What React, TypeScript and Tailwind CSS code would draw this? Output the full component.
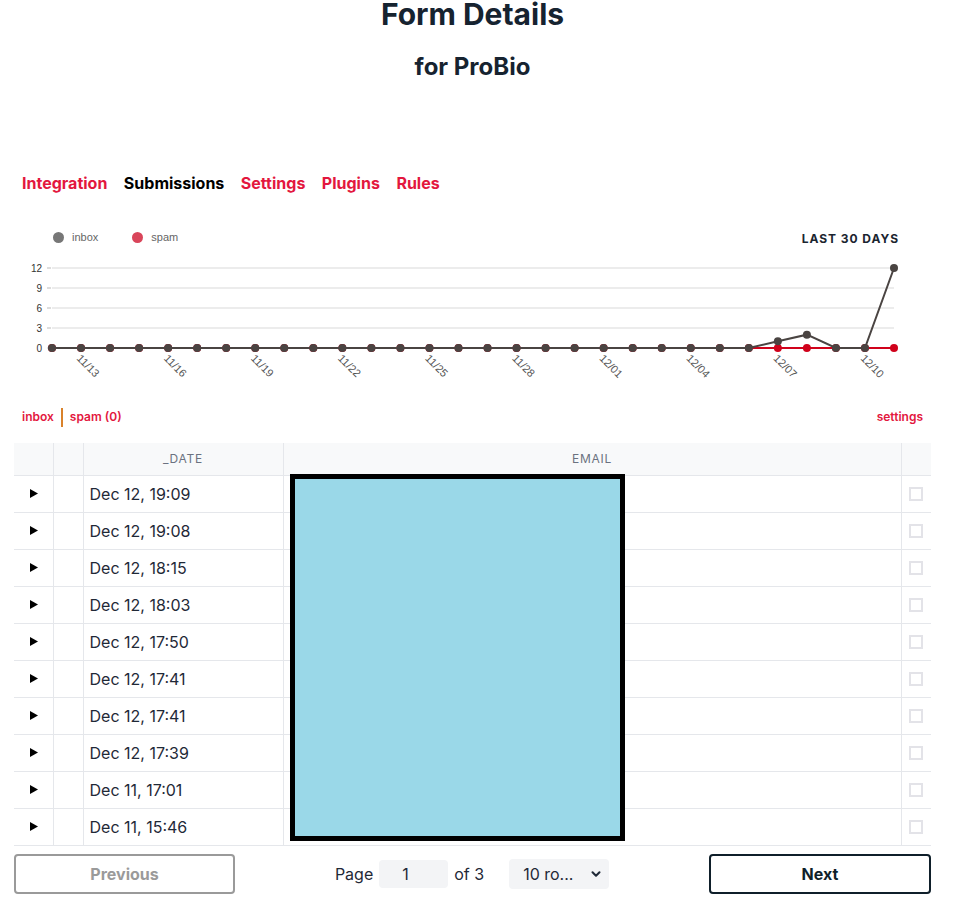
import { ChevronDown } from "lucide-react";

const RED = "#e3173e";

const inbox = [0, 0, 0, 0, 0, 0, 0, 0, 0, 0, 0, 0, 0, 0, 0, 0, 0, 0, 0, 0, 0, 0, 0, 0, 0, 1, 2, 0, 0, 12];
const spam = inbox.map(() => 0);

const labelFor = (i: number) => {
  // day 0 is 11/12
  const d = new Date(2023, 10, 12 + i);
  const mm = String(d.getMonth() + 1).padStart(2, "0");
  const dd = String(d.getDate()).padStart(2, "0");
  return `${mm}/${dd}`;
};

const rows = [
  "Dec 12, 19:09",
  "Dec 12, 19:08",
  "Dec 12, 18:15",
  "Dec 12, 18:03",
  "Dec 12, 17:50",
  "Dec 12, 17:41",
  "Dec 12, 17:41",
  "Dec 12, 17:39",
  "Dec 11, 17:01",
  "Dec 11, 15:46",
];

const Chart = () => {
  const x0 = 38;
  const step = (880 - 38) / 29;
  const yFor = (v: number) => 92 - (v * 80) / 12;
  const px = (i: number) => x0 + i * step;
  const line = (data: number[]) => data.map((v, i) => `${i === 0 ? "M" : "L"}${px(i)},${yFor(v)}`).join(" ");

  return (
    <svg width="917" height="135" className="block" style={{ fontFamily: "'Liberation Sans', Arial, sans-serif" }}>
      {[0, 3, 6, 9, 12].map((v) => (
        <g key={v}>
          {v > 0 && <line x1={x0} x2={880} y1={yFor(v)} y2={yFor(v)} stroke="#ececec" strokeWidth="2" />}
          <line x1={33} x2={37} y1={yFor(v)} y2={yFor(v)} stroke="#bbb" strokeWidth="1" />
          <text x={28} y={yFor(v) + 3.5} fontSize="10" fill="#333" textAnchor="end">
            {v}
          </text>
        </g>
      ))}
      {inbox.map((_, i) =>
        i % 3 === 1 ? (
          <text key={i} fontSize="11" fill="#555" transform={`translate(${px(i) - 5},${103}) rotate(45)`}>
            {labelFor(i)}
          </text>
        ) : null
      )}
      <path d={line(spam)} fill="none" stroke="#d0021b" strokeWidth="2" />
      {spam.map((v, i) => (
        <circle key={i} cx={px(i)} cy={yFor(v)} r="4" fill="#d0021b" />
      ))}
      <path d={line(inbox)} fill="none" stroke="#4a4442" strokeWidth="2" />
      {inbox.map((v, i) => (
        <circle key={i} cx={px(i)} cy={yFor(v)} r="4" fill="#4a4442" />
      ))}
    </svg>
  );
};

const Triangle = () => (
  <svg width="8" height="9" viewBox="0 0 8 9">
    <polygon points="0,0 8,4.5 0,9" fill="#000" />
  </svg>
);

export default function App() {
  return (
    <div className="w-[967px] bg-white text-[#1f2937]" style={{ fontFamily: "Inter, 'Liberation Sans', sans-serif" }}>
      <div className="ml-[14px] w-[917px]">
        <h1 className="text-center text-[30px] font-bold leading-[28px] text-[#162330]">Form Details</h1>
        <h2 className="mt-[26px] text-center text-[24px] font-bold leading-[26px] text-[#162330]">for ProBio</h2>

        <nav className="mt-[91px] flex gap-[16.5px] pl-2 text-[16px] font-bold leading-[24px]">
          <span style={{ color: RED }}>Integration</span>
          <span className="text-black">Submissions</span>
          <span style={{ color: RED }}>Settings</span>
          <span style={{ color: RED }}>Plugins</span>
          <span style={{ color: RED }}>Rules</span>
        </nav>

        <div className="mt-[31px] flex h-[22px] items-center justify-between pr-[32px]">
          <div className="flex items-center pl-[39px] text-[11px] text-[#666]" style={{ fontFamily: "'Liberation Sans', Arial, sans-serif" }}>
            <span className="h-[11px] w-[11px] rounded-full bg-[#777]" />
            <span className="ml-[8px]">inbox</span>
            <span className="ml-[34px] h-[11px] w-[11px] rounded-full bg-[#d9455a]" />
            <span className="ml-[8px]">spam</span>
          </div>
          <div className="mt-[4px] text-[12px] font-bold tracking-[0.08em] text-[#1b2530]">LAST 30 DAYS</div>
        </div>

        <div className="mt-[8px]">
          <Chart />
        </div>

        <div className="mt-[16px] flex h-[20px] items-center justify-between pl-2 pr-2 text-[12px] font-semibold" style={{ color: RED }}>
          <div className="flex items-center">
            <span>inbox</span>
            <span className="mx-[7px] h-[19px] w-[2px] bg-[#d9822b]" />
            <span>spam (0)</span>
          </div>
          <span>settings</span>
        </div>

        <div className="relative mt-[16px]">
          <table className="w-[917px] table-fixed border-collapse">
            <colgroup>
              <col className="w-[39px]" />
              <col className="w-[30px]" />
              <col className="w-[200px]" />
              <col />
              <col className="w-[30px]" />
            </colgroup>
            <thead>
              <tr className="h-[32px] bg-[#f8f9fa] text-[12px] font-normal uppercase tracking-[0.06em] text-[#6b7280]">
                <th className="border-b border-[#e5e7eb]" />
                <th className="border-b border-l border-[#e5e7eb]" />
                <th className="border-b border-l border-[#e5e7eb] font-normal">_date</th>
                <th className="border-b border-l border-[#e5e7eb] font-normal">email</th>
                <th className="border-b border-l border-[#e5e7eb]" />
              </tr>
            </thead>
            <tbody>
              {rows.map((r, i) => (
                <tr key={i} className="h-[37px]">
                  <td className="border-b border-[#e5e7eb]">
                    <div className="flex justify-center pl-[1px]">
                      <Triangle />
                    </div>
                  </td>
                  <td className="border-b border-l border-[#e5e7eb]" />
                  <td className="border-b border-l border-[#e5e7eb] pl-[6px] text-[16px] text-[#1f2937]">{r}</td>
                  <td className="border-b border-l border-[#e5e7eb]" />
                  <td className="border-b border-l border-[#e5e7eb]">
                    <div className="flex justify-center">
                      <span className="h-[14px] w-[14px] border-2 border-[#e3e3e8]" />
                    </div>
                  </td>
                </tr>
              ))}
            </tbody>
          </table>
          <div className="absolute left-[276px] top-[31px] h-[367px] w-[335px] border-[5px] border-black bg-[#9ad8e8]" />
        </div>

        <div className="mt-[8px] flex items-center justify-between">
          <button className="h-[40px] w-[221px] rounded-[4px] border-2 border-[#9a9a9a] text-[16px] font-bold text-[#9a9a9a]">
            Previous
          </button>
          <div className="flex items-center text-[16px] text-[#1f2937]">
            <span>Page</span>
            <span className="ml-[6px] flex h-[28px] w-[69px] items-center rounded-[4px] bg-[#f3f4f6] pl-[23px]">1</span>
            <span className="ml-[6px]">of 3</span>
            <span className="ml-[25px] flex h-[30px] w-[100px] items-center justify-between rounded-[4px] bg-[#f3f4f6] pl-[14px] pr-[6px]">
              <span>10 ro...</span>
              <ChevronDown className="h-[14px] w-[14px]" strokeWidth={3.5} />
            </span>
          </div>
          <button className="h-[40px] w-[222px] rounded-[4px] border-2 border-[#0f1f2a] text-[16px] font-bold text-[#0f1f2a]">
            Next
          </button>
        </div>
      </div>
    </div>
  );
}
